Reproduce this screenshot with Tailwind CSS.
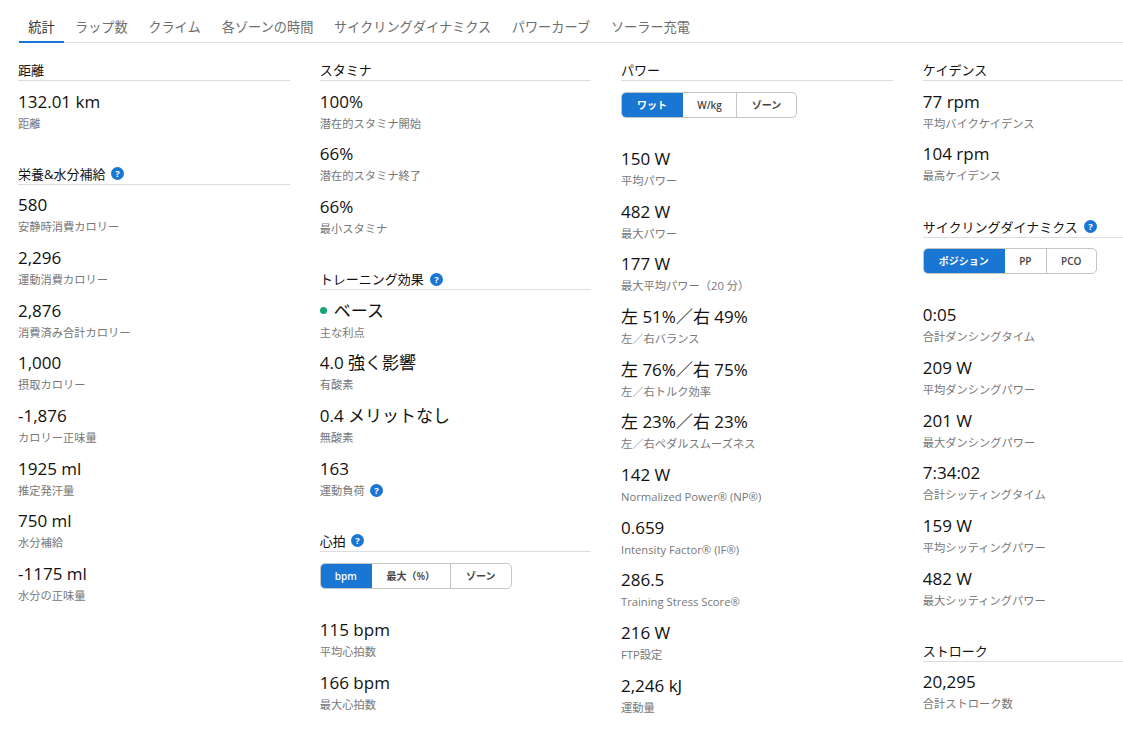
<!DOCTYPE html>
<html>

<head>
    <meta charset="UTF-8">
    <title>統計</title>
    <script src="https://cdn.jsdelivr.net/npm/@tailwindcss/browser@4"></script>
</head>

<body class="bg-white h-[731px] w-[1123px] overflow-hidden text-[#111] font-['Open_Sans','Noto_Sans_CJK_JP',sans-serif]">
    <!-- Tabs -->
    <nav class="ml-[19px] mt-[14px] h-[29px] flex border-b border-[#ddd] text-[13.2px] leading-[26px] text-[#6e6e6e]">
        <a class="w-[45px] h-[29px] text-center text-[#333] border-b-2 border-[#1976d2]">統計</a>
        <a class="ml-[11px]">ラップ数</a>
        <a class="ml-[20.5px]">クライム</a>
        <a class="ml-[21px]">各ゾーンの時間</a>
        <a class="ml-[20.5px]">サイクリングダイナミクス</a>
        <a class="ml-[20.5px]">パワーカーブ</a>
        <a class="ml-[20.8px]">ソーラー充電</a>
    </nav>

    <main class="grid grid-cols-[272px_271.4px_272px_200.2px] gap-x-[29.8px] ml-[18px] mt-[18px]">
        <!-- Column 1 -->
        <div>
            <h3 class="h-[20px] border-b border-[#ddd] text-[13px] leading-[18px]">距離</h3>
            <div class="mt-[8.7px]">
                <div class="h-[52.67px]"><p class="text-[17px] leading-[24px]">132.01 km</p><p class="text-[11.25px] leading-[20px] text-[#777]">距離</p></div>
            </div>
            <h3 class="mt-[22.38px] h-[20px] pb-px border-b border-[#ddd] text-[13px] leading-[18px] flex items-center gap-[6px]">栄養&amp;水分補給
                <svg class="w-[13px] h-[13px]" viewBox="0 0 13 13"><circle cx="6.5" cy="6.5" r="6.5" fill="#1976d2"/><text x="6.5" y="10" text-anchor="middle" font-size="9.5" font-weight="700" fill="#fff">?</text></svg>
            </h3>
            <div class="mt-[8.7px]">
                <div class="h-[52.67px]"><p class="text-[17px] leading-[24px]">580</p><p class="text-[11.25px] leading-[20px] text-[#777]">安静時消費カロリー</p></div>
                <div class="h-[52.67px]"><p class="text-[17px] leading-[24px]">2,296</p><p class="text-[11.25px] leading-[20px] text-[#777]">運動消費カロリー</p></div>
                <div class="h-[52.67px]"><p class="text-[17px] leading-[24px]">2,876</p><p class="text-[11.25px] leading-[20px] text-[#777]">消費済み合計カロリー</p></div>
                <div class="h-[52.67px]"><p class="text-[17px] leading-[24px]">1,000</p><p class="text-[11.25px] leading-[20px] text-[#777]">摂取カロリー</p></div>
                <div class="h-[52.67px]"><p class="text-[17px] leading-[24px]">-1,876</p><p class="text-[11.25px] leading-[20px] text-[#777]">カロリー正味量</p></div>
                <div class="h-[52.67px]"><p class="text-[17px] leading-[24px]">1925 ml</p><p class="text-[11.25px] leading-[20px] text-[#777]">推定発汗量</p></div>
                <div class="h-[52.67px]"><p class="text-[17px] leading-[24px]">750 ml</p><p class="text-[11.25px] leading-[20px] text-[#777]">水分補給</p></div>
                <div class="h-[52.67px]"><p class="text-[17px] leading-[24px]">-1175 ml</p><p class="text-[11.25px] leading-[20px] text-[#777]">水分の正味量</p></div>
            </div>
        </div>

        <!-- Column 2 -->
        <div>
            <h3 class="h-[20px] border-b border-[#ddd] text-[13px] leading-[18px]">スタミナ</h3>
            <div class="mt-[8.7px]">
                <div class="h-[52.67px]"><p class="text-[17px] leading-[24px]">100%</p><p class="text-[11.25px] leading-[20px] text-[#777]">潜在的スタミナ開始</p></div>
                <div class="h-[52.67px]"><p class="text-[17px] leading-[24px]">66%</p><p class="text-[11.25px] leading-[20px] text-[#777]">潜在的スタミナ終了</p></div>
                <div class="h-[52.67px]"><p class="text-[17px] leading-[24px]">66%</p><p class="text-[11.25px] leading-[20px] text-[#777]">最小スタミナ</p></div>
            </div>
            <h3 class="mt-[22.38px] h-[20px] pb-px border-b border-[#ddd] text-[13px] leading-[18px] flex items-center gap-[6px]">トレーニング効果
                <svg class="w-[13px] h-[13px]" viewBox="0 0 13 13"><circle cx="6.5" cy="6.5" r="6.5" fill="#1976d2"/><text x="6.5" y="10" text-anchor="middle" font-size="9.5" font-weight="700" fill="#fff">?</text></svg>
            </h3>
            <div class="mt-[8.7px]">
                <div class="h-[52.67px]"><p class="text-[17px] leading-[24px] flex items-center"><span class="w-[7px] h-[7px] rounded-full bg-[#11a579] mr-[7px]"></span>ベース</p><p class="text-[11.25px] leading-[20px] text-[#777]">主な利点</p></div>
                <div class="h-[52.67px]"><p class="text-[17px] leading-[24px]">4.0 強く影響</p><p class="text-[11.25px] leading-[20px] text-[#777]">有酸素</p></div>
                <div class="h-[52.67px]"><p class="text-[17px] leading-[24px]">0.4 メリットなし</p><p class="text-[11.25px] leading-[20px] text-[#777]">無酸素</p></div>
                <div class="h-[52.67px]"><p class="text-[17px] leading-[24px]">163</p><p class="text-[11.25px] leading-[20px] text-[#777] flex items-center gap-[5px]">運動負荷
                    <svg class="w-[13px] h-[13px]" viewBox="0 0 13 13"><circle cx="6.5" cy="6.5" r="6.5" fill="#1976d2"/><text x="6.5" y="10" text-anchor="middle" font-size="9.5" font-weight="700" fill="#fff">?</text></svg></p></div>
            </div>
            <h3 class="mt-[22.38px] h-[20px] pb-px border-b border-[#ddd] text-[13px] leading-[18px] flex items-center gap-[5px]">心拍
                <svg class="w-[13px] h-[13px]" viewBox="0 0 13 13"><circle cx="6.5" cy="6.5" r="6.5" fill="#1976d2"/><text x="6.5" y="10" text-anchor="middle" font-size="9.5" font-weight="700" fill="#fff">?</text></svg>
            </h3>
            <div class="mt-[11px] flex w-[192px] h-[26px] border border-[#c4c4c4] rounded-[5px] overflow-hidden text-[10px] leading-[24px] text-center font-semibold text-[#444]">
                <span class="w-[52px] -my-px -ml-px bg-[#1976d2] text-white leading-[26px]">bpm</span>
                <span class="w-[79px] border-r border-[#c4c4c4]">最大（%）</span>
                <span class="flex-1">ゾーン</span>
            </div>
            <div class="mt-[29.3px]">
                <div class="h-[52.67px]"><p class="text-[17px] leading-[24px]">115 bpm</p><p class="text-[11.25px] leading-[20px] text-[#777]">平均心拍数</p></div>
                <div class="h-[52.67px]"><p class="text-[17px] leading-[24px]">166 bpm</p><p class="text-[11.25px] leading-[20px] text-[#777]">最大心拍数</p></div>
            </div>
        </div>

        <!-- Column 3 -->
        <div>
            <h3 class="h-[20px] border-b border-[#ddd] text-[13px] leading-[18px]">パワー</h3>
            <div class="mt-[11px] flex w-[176px] h-[26px] border border-[#c4c4c4] rounded-[5px] overflow-hidden text-[10px] leading-[24px] text-center font-semibold text-[#444]">
                <span class="w-[62px] -my-px -ml-px bg-[#1976d2] text-white leading-[26px]">ワット</span>
                <span class="w-[54px] border-r border-[#c4c4c4]">W/kg</span>
                <span class="flex-1">ゾーン</span>
            </div>
            <div class="mt-[29px]">
                <div class="h-[52.67px]"><p class="text-[17px] leading-[24px]">150 W</p><p class="text-[11.25px] leading-[20px] text-[#777]">平均パワー</p></div>
                <div class="h-[52.67px]"><p class="text-[17px] leading-[24px]">482 W</p><p class="text-[11.25px] leading-[20px] text-[#777]">最大パワー</p></div>
                <div class="h-[52.67px]"><p class="text-[17px] leading-[24px]">177 W</p><p class="text-[11.25px] leading-[20px] text-[#777]">最大平均パワー（20 分）</p></div>
                <div class="h-[52.67px]"><p class="text-[17px] leading-[24px]">左 51%／右 49%</p><p class="text-[11.25px] leading-[20px] text-[#777]">左／右バランス</p></div>
                <div class="h-[52.67px]"><p class="text-[17px] leading-[24px]">左 76%／右 75%</p><p class="text-[11.25px] leading-[20px] text-[#777]">左／右トルク効率</p></div>
                <div class="h-[52.67px]"><p class="text-[17px] leading-[24px]">左 23%／右 23%</p><p class="text-[11.25px] leading-[20px] text-[#777]">左／右ペダルスムーズネス</p></div>
                <div class="h-[52.67px]"><p class="text-[17px] leading-[24px]">142 W</p><p class="text-[11.25px] leading-[20px] text-[#777]">Normalized Power® (NP®)</p></div>
                <div class="h-[52.67px]"><p class="text-[17px] leading-[24px]">0.659</p><p class="text-[11.25px] leading-[20px] text-[#777]">Intensity Factor® (IF®)</p></div>
                <div class="h-[52.67px]"><p class="text-[17px] leading-[24px]">286.5</p><p class="text-[11.25px] leading-[20px] text-[#777]">Training Stress Score®</p></div>
                <div class="h-[52.67px]"><p class="text-[17px] leading-[24px]">216 W</p><p class="text-[11.25px] leading-[20px] text-[#777]">FTP設定</p></div>
                <div class="h-[52.67px]"><p class="text-[17px] leading-[24px]">2,246 kJ</p><p class="text-[11.25px] leading-[20px] text-[#777]">運動量</p></div>
            </div>
        </div>

        <!-- Column 4 -->
        <div>
            <h3 class="h-[20px] border-b border-[#ddd] text-[13px] leading-[18px]">ケイデンス</h3>
            <div class="mt-[8.7px]">
                <div class="h-[52.67px]"><p class="text-[17px] leading-[24px]">77 rpm</p><p class="text-[11.25px] leading-[20px] text-[#777]">平均バイクケイデンス</p></div>
                <div class="h-[52.67px]"><p class="text-[17px] leading-[24px]">104 rpm</p><p class="text-[11.25px] leading-[20px] text-[#777]">最高ケイデンス</p></div>
            </div>
            <h3 class="mt-[22.9px] h-[20px] pb-px border-b border-[#ddd] text-[13px] leading-[18px] flex items-center gap-[6px]">サイクリングダイナミクス
                <svg class="w-[13px] h-[13px]" viewBox="0 0 13 13"><circle cx="6.5" cy="6.5" r="6.5" fill="#1976d2"/><text x="6.5" y="10" text-anchor="middle" font-size="9.5" font-weight="700" fill="#fff">?</text></svg>
            </h3>
            <div class="mt-[10px] flex w-[174px] h-[26px] border border-[#c4c4c4] rounded-[5px] overflow-hidden text-[10px] leading-[24px] text-center font-semibold text-[#444]">
                <span class="w-[82px] -my-px -ml-px bg-[#1976d2] text-white leading-[26px]">ポジション</span>
                <span class="w-[42px] border-r border-[#c4c4c4]">PP</span>
                <span class="flex-1">PCO</span>
            </div>
            <div class="mt-[29.5px]">
                <div class="h-[52.67px]"><p class="text-[17px] leading-[24px]">0:05</p><p class="text-[11.25px] leading-[20px] text-[#777]">合計ダンシングタイム</p></div>
                <div class="h-[52.67px]"><p class="text-[17px] leading-[24px]">209 W</p><p class="text-[11.25px] leading-[20px] text-[#777]">平均ダンシングパワー</p></div>
                <div class="h-[52.67px]"><p class="text-[17px] leading-[24px]">201 W</p><p class="text-[11.25px] leading-[20px] text-[#777]">最大ダンシングパワー</p></div>
                <div class="h-[52.67px]"><p class="text-[17px] leading-[24px]">7:34:02</p><p class="text-[11.25px] leading-[20px] text-[#777]">合計シッティングタイム</p></div>
                <div class="h-[52.67px]"><p class="text-[17px] leading-[24px]">159 W</p><p class="text-[11.25px] leading-[20px] text-[#777]">平均シッティングパワー</p></div>
                <div class="h-[52.67px]"><p class="text-[17px] leading-[24px]">482 W</p><p class="text-[11.25px] leading-[20px] text-[#777]">最大シッティングパワー</p></div>
            </div>
            <h3 class="mt-[22.38px] h-[20px] border-b border-[#ddd] text-[13px] leading-[18px]">ストローク</h3>
            <div class="mt-[8.7px]">
                <div class="h-[52.67px]"><p class="text-[17px] leading-[24px]">20,295</p><p class="text-[11.25px] leading-[20px] text-[#777]">合計ストローク数</p></div>
            </div>
        </div>
    </main>
</body>

</html>
